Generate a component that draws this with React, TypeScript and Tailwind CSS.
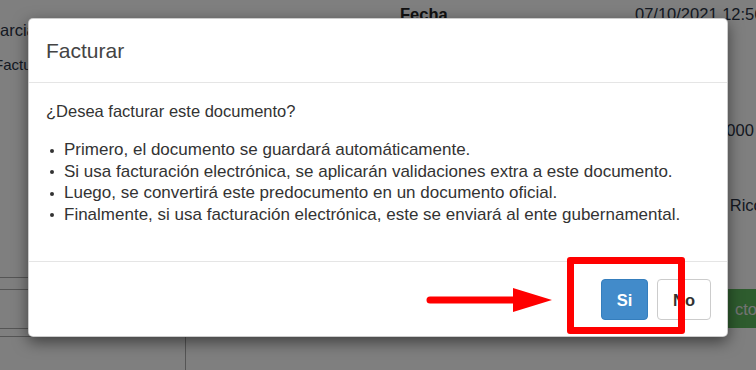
import React from "react";

const font = { fontFamily: '"Liberation Sans", Arial, sans-serif' };

export default function App() {
  const items = [
    "Primero, el documento se guardará automáticamente.",
    "Si usa facturación electrónica, se aplicarán validaciones extra a este documento.",
    "Luego, se convertirá este predocumento en un documento oficial.",
    "Finalmente, si usa facturación electrónica, este se enviará al ente gubernamental.",
  ];
  return (
    <div
      className="relative w-[756px] h-[370px] overflow-hidden bg-white text-[16.5px] leading-[22px] text-[#333]"
      style={font}
    >
      {/* background page */}
      <div className="flex h-full">
        <div className="w-[186px] flex flex-col">
          <div className="mt-[19px] ml-[-11px] whitespace-nowrap text-[#2a3345]">Parcial</div>
          <div className="mt-[13px] ml-[-6px] whitespace-nowrap text-[#2a3345] text-[15px]">Factura</div>
          <div className="mt-[201px] border-t border-[#aaa] h-[12px]" />
          <div className="border-t border-[#aaa] h-[39px]" />
          <div className="border-t border-[#aaa] h-[8px]" />
          <div className="flex-1 border-t border-r border-[#aaa]" />
        </div>
        <div className="w-[542px] pt-[3px]">
          <div className="grid grid-cols-[214px_235px_auto]">
            <div />
            <div className="font-bold text-[#222]">Fecha</div>
            <div className="whitespace-nowrap text-[#2a3345]">07/10/2021 12:56</div>
          </div>
        </div>
        <div className="w-[28px] flex flex-col">
          <div className="mt-[119px] ml-[-20px] whitespace-nowrap text-[#2a3345]">10000</div>
          <div className="mt-[53px] ml-[-12px] whitespace-nowrap text-[#2a3345]">
            <span className="text-[#2a6ab0]">a</span> Rico
          </div>
          <div className="mt-[73px] h-[39px] w-[60px] ml-[-30px] bg-[#5cb85c] text-[#e8e8e8] flex items-center pl-[37px] whitespace-nowrap">
            cto
          </div>
        </div>
      </div>

      {/* overlay + modal */}
      <div className="absolute inset-0 bg-black/50">
        <div className="mt-[18px] ml-[28px] w-[700px] bg-white rounded-[5px] border border-black/20 shadow-[0_5px_15px_rgba(0,0,0,0.5)] box-border">
          <div className="h-[64px] px-[17px] flex items-center border-b border-[#e5e5e5]">
            <h4 className="text-[21px] leading-[24px] text-[#444]">Facturar</h4>
          </div>
          <div className="h-[178px] px-[17px] pt-[18px]">
            <p className="leading-[21.5px] mb-[16.5px]">¿Desea facturar este documento?</p>
            <ul className="text-[17px]">
              {items.map((t) => (
                <li key={t} className="flex items-center leading-[21.5px]">
                  <span className="ml-[4px] mr-[10px] mt-[2px] w-[4px] h-[4px] rounded-full bg-[#333] shrink-0" />
                  <span>{t}</span>
                </li>
              ))}
            </ul>
          </div>
          <div className="h-[75px] border-t border-[#e5e5e5] flex justify-end items-start pt-[17px] pr-[16px] gap-[9px]">
            <button className="h-[41px] w-[47px] rounded-[4px] bg-[#428bca] border border-[#357ebd] text-white font-bold">
              Si
            </button>
            <button className="h-[41px] w-[54px] rounded-[4px] bg-white border border-[#ccc] text-[#333] font-bold">
              No
            </button>
          </div>
        </div>
      </div>

      {/* annotations */}
      <div className="absolute left-[567px] top-[257px] w-[118px] h-[77px] border-[7px] border-[#ff0000] rounded-[3px]" />
      <svg className="absolute left-[420px] top-[284px]" width="140" height="32" viewBox="0 0 140 32">
        <line x1="10" y1="16" x2="96" y2="16" stroke="#ff0000" strokeWidth="7" strokeLinecap="round" />
        <polygon points="93,4 132,16 93,28" fill="#ff0000" />
      </svg>
    </div>
  );
}
